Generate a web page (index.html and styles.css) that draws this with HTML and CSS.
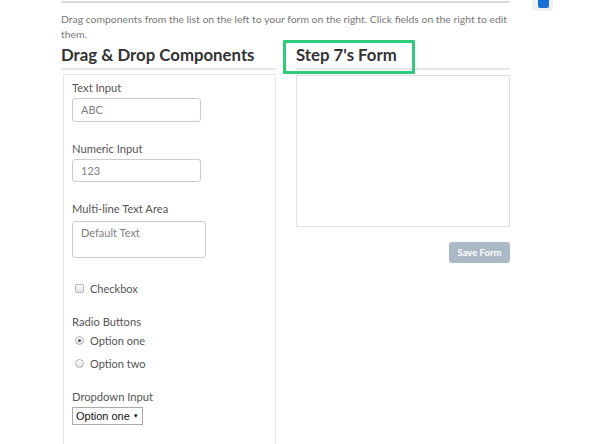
FILE: index.html
```html
<!DOCTYPE html>
<html>
<head>
<meta charset="utf-8">
<link rel="stylesheet" href="styles.css">
</head>
<body>
<div class="corner"><span class="corner-fill"></span></div>
<div class="page">
  <div class="topline"></div>
  <p class="desc">Drag components from the list on the left to your form on the right. Click fields on the right to edit them.</p>
  <div class="columns">
    <div class="col-left">
      <h2 class="heading">Drag &amp; Drop Components</h2>
      <div class="panel">
        <div class="field">
          <div class="label">Text Input</div>
          <div class="input">ABC</div>
        </div>
        <div class="field">
          <div class="label">Numeric Input</div>
          <div class="input input-num">123</div>
        </div>
        <div class="field">
          <div class="label">Multi-line Text Area</div>
          <div class="textarea">Default Text</div>
        </div>
        <div class="check-row">
          <span class="checkbox"></span>
          <span class="opt">Checkbox</span>
        </div>
        <div class="field field-radio">
          <div class="label">Radio Buttons</div>
          <div class="radio-row"><span class="radio radio-on"></span><span class="opt">Option one</span></div>
          <div class="radio-row"><span class="radio"></span><span class="opt">Option two</span></div>
        </div>
        <div class="field">
          <div class="label">Dropdown Input</div>
          <div class="select">Option one <span class="arrow">&#9660;</span></div>
        </div>
      </div>
    </div>
    <div class="col-right">
      <div class="heading-wrap">
        <h2 class="heading">Step 7's Form</h2>
        <div class="highlight"></div>
      </div>
      <div class="form-box"></div>
      <div class="actions"><button class="save">Save Form</button></div>
    </div>
  </div>
</div>
</body>
</html>
```

FILE: styles.css
```css
html, body {
  margin: 0;
  padding: 0;
  background: #ffffff;
}
body {
  font-family: Lato, "Open Sans", sans-serif;
  color: #555;
  position: relative;
  width: 592px;
  height: 444px;
  overflow: hidden;
}
.corner {
  position: absolute;
  left: 532px;
  top: 0;
  width: 21px;
  height: 11px;
  background: #eef0f2;
  border-radius: 0 0 3px 3px;
}
.corner-fill {
  position: absolute;
  left: 6px;
  top: 0;
  width: 11px;
  height: 8px;
  background: #1a6fd6;
  border-radius: 0 0 2px 2px;
}
.page {
  padding-left: 61px;
  width: 449px;
}
.topline {
  height: 2px;
  background: #dcdcdc;
  margin-top: 1px;
}
.desc {
  margin: 9px 0 0 0;
  font-size: 10.4px;
  line-height: 15px;
  color: #777;
}
.columns {
  display: flex;
  gap: 20px;
  margin-top: 0;
}
.col-left {
  width: 215px;
}
.col-right {
  width: 214px;
}
.heading {
  margin: 0;
  font-size: 16.8px;
  font-weight: 700;
  color: #333;
  line-height: 26px;
  padding-bottom: 0;
  border-bottom: 2px solid #e6e6e6;
}
.panel {
  margin-left: 2px;
  margin-top: 4px;
  width: 203px;
  height: 380px;
  border: 1px solid #e6e6e6;
  border-bottom: none;
  padding: 5px 0 0 8px;
}
.field {
  margin-bottom: 19px;
}
.label {
  font-size: 11.2px;
  line-height: 16px;
  margin-bottom: 2px;
  color: #555;
}
.input {
  width: 119px;
  height: 22px;
  border: 1px solid #ccc;
  border-radius: 3px;
  padding-left: 8px;
  font-size: 11px;
  line-height: 22px;
  color: #808080;
}
.input-num {
  height: 21px;
  line-height: 21px;
}
.textarea {
  width: 124px;
  height: 35px;
  border: 1px solid #ccc;
  border-radius: 3px;
  padding-left: 8px;
  font-size: 11px;
  line-height: 22px;
  color: #808080;
  margin-top: 4px;
}
.check-row {
  display: flex;
  align-items: center;
  height: 16px;
  margin-top: 22px;
  margin-bottom: 18px;
}
.checkbox {
  width: 7px;
  height: 7px;
  margin-left: 3px;
  margin-right: 6px;
  border: 1px solid #b5b5b5;
  border-radius: 2px;
  background: linear-gradient(#ffffff, #e2e2e2);
}
.opt {
  font-size: 11px;
  color: #555;
}
.radio-row {
  display: flex;
  align-items: center;
  height: 16px;
  margin-bottom: 7px;
}
.radio-row:last-child {
  margin-bottom: 0;
}
.field-radio {
  margin-bottom: 18px;
}
.radio {
  position: relative;
  width: 7px;
  height: 7px;
  margin-left: 3px;
  margin-right: 6px;
  border: 1px solid #b5b5b5;
  border-radius: 50%;
  background: linear-gradient(#ffffff, #e2e2e2);
}
.radio-on::after {
  content: "";
  position: absolute;
  left: 2px;
  top: 2px;
  width: 3px;
  height: 3px;
  border-radius: 50%;
  background: #555;
}
.select {
  display: flex;
  align-items: center;
  gap: 3px;
  width: max-content;
  height: 16px;
  border: 1px solid #a9a9a9;
  padding: 0 3px 0 3px;
  font-family: "Liberation Sans", Arial, sans-serif;
  font-size: 11px;
  line-height: 16px;
  color: #111;
}
.arrow {
  font-size: 6px;
  line-height: 6px;
}
.heading-wrap {
  position: relative;
}
.highlight {
  position: absolute;
  left: -13px;
  top: -2px;
  width: 126px;
  height: 28px;
  border: 3px solid #2ecc7a;
  border-radius: 1px;
}
.form-box {
  margin-top: 5px;
  width: 212px;
  height: 150px;
  border: 1px solid #e0e0e0;
}
.actions {
  display: flex;
  justify-content: flex-end;
  margin-top: 15px;
}
.save {
  width: 61px;
  height: 21px;
  border: none;
  border-radius: 3px;
  background: #abb9c6;
  color: #fff;
  font-family: Lato, sans-serif;
  font-size: 9.5px;
  font-weight: 700;
  padding: 0;
}
```
